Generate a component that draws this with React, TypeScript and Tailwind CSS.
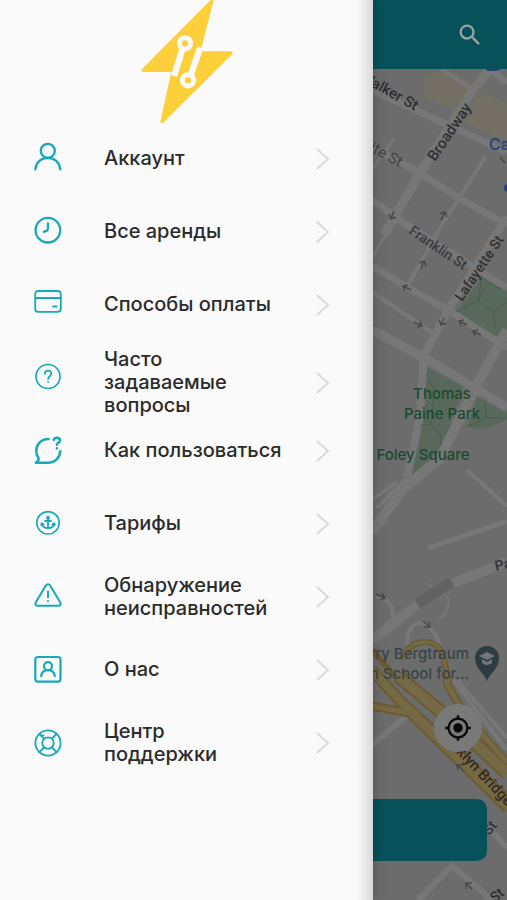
import type { ReactNode } from "react";
import { MdMyLocation, MdSearch } from "react-icons/md";

type MenuItem = {
    label: string;
    icon: ReactNode;
    tall?: boolean;
};

const items: MenuItem[] = [
    {
        label: "Аккаунт",
        icon: (
            <g strokeWidth="2.3">
                <circle cx="13.8" cy="6.8" r="7" />
                <path d="M1.3 25.4C2 18.300 7.200 13.800 13.800 13.800s11.800 4.500 12.500 11.600" />
            </g>
        ),
    },
    {
        label: "Все аренды",
        icon: (
            <g strokeWidth="2.3">
                <circle cx="13.9" cy="13.2" r="12.3" />
                <path d="M13.9 6.500v5.200c0 1-.3 1.500-1.100 1.900l-2.900 1.300" />
            </g>
        ),
    },
    {
        label: "Способы оплаты",
        icon: (
            <g strokeWidth="1.8">
                <rect x="1.2" y="1" width="25.6" height="20.8" rx="3" />
                <path d="M1.2 8h25.600M19 16.500h3.600" />
            </g>
        ),
    },
    {
        label: "Часто\nзадаваемые\nвопросы",
        tall: true,
        icon: (
            <g strokeWidth="1.7">
                <circle cx="14" cy="13.5" r="12" />
                <path d="M10.800 10.800c0-2 1.300-3.200 3.200-3.200s3.300 1.200 3.300 3c0 2.600-3.200 2.700-3.200 5.500M14.100 18.800v.3" />
            </g>
        ),
    },
    {
        label: "Как пользоваться",
        icon: (
            <g strokeWidth="2.5">
                <path d="M14.500 2.900C7 2.900 2.200 8.500 2.200 15c0 3 .8 5 2.400 7.200.3 1.600-1 3.200-2.800 4.600H14c7 0 11.900-5.200 12.300-11.600" />
                <path d="M19.800 3.800c.4-1.400 1.500-2.100 3-2.100 1.900 0 3.200 1.100 3.200 2.800 0 2.300-3.100 2.100-3.100 4.200M22.900 12.200v.2" />
            </g>
        ),
    },
    {
        label: "Тарифы",
        icon: (
            <g strokeWidth="1.6">
                <circle cx="14" cy="13.8" r="11.2" />
                <g strokeWidth="1.8">
                    <circle cx="14" cy="8.600" r="1" />
                    <path d="M14 9.600v9.600M11 12h6M7.800 14.400c.6 3.300 3.200 4.800 6.200 4.800s5.600-1.500 6.200-4.800M7.200 16l.6-1.800 1.700 1M20.800 16l-.6-1.800-1.700 1" />
                </g>
            </g>
        ),
    },
    {
        label: "Обнаружение\nнеисправностей",
        icon: (
            <g strokeWidth="2">
                <path d="M11.800 3.600 1.700 20.500c-.9 1.500.1 3.200 1.900 3.200h20.800c1.800 0 2.800-1.700 1.900-3.200L16.200 3.600c-1.100-1.800-3.300-1.800-4.400 0z" />
                <path d="M14 9.500v5.800M14 19v.2" />
            </g>
        ),
    },
    {
        label: "О нас",
        icon: (
            <g strokeWidth="2.2">
                <rect x="1.3" y="2" width="25.2" height="24.6" rx="2.5" />
                <circle cx="14" cy="11.200" r="4" />
                <path d="M7.200 21.200c.5-4 3.200-6 6.800-6s6.300 2 6.800 6" />
            </g>
        ),
    },
    {
        label: "Центр\nподдержки",
        icon: (
            <g strokeWidth="1.8">
                <circle cx="14" cy="15" r="12.6" />
                <circle cx="14" cy="15" r="5.7" />
                <path d="m5.200 5.800 4.900 4.700M6.600 7.600l2.900-.2M22.800 5.800l-4.900 4.700M5.200 24.200l4.900-4.700M22.800 24.200l-4.900-4.700" />
            </g>
        ),
    },
];

function Logo() {
    return (
        <svg className="h-[124px] w-[93px]" viewBox="60 0 279 372" aria-hidden="true">
            <path
                d="M275 4 69 211h91L126 365 333 159h-98z"
                fill="#fdd03b"
                stroke="#fdd03b"
                strokeWidth="10"
                strokeLinejoin="round"
            />
            <g stroke="#fafafa" strokeWidth="19" fill="none">
                <path d="m188 146-26 82" />
                <path d="m211 228 30-86" />
            </g>
            <g fill="#fdd03b" stroke="#fafafa" strokeWidth="15">
                <circle cx="195" cy="130" r="17" />
                <circle cx="204" cy="241" r="17" />
            </g>
        </svg>
    );
}

function CityMap() {
    return (
        <svg
            className="absolute inset-0 h-full w-full bg-[#6c6c6d]"
            viewBox="0 69 507 831"
            preserveAspectRatio="xMaxYMin slice"
            aria-hidden="true"
        >
            {/* blocks */}
            <path d="M424 76 450 69l22 14-16 27-32-12z" fill="#736f65" />
            <path d="m478 91 29 12v38l-42-18z" fill="#736f65" />
            <path d="M483 276 507 291v47l-8 1-43-27z" fill="#58695c" />
            <path d="m425 366 38 20-20 61-24 27-12-6 15-43z" fill="#58695c" />
            <path d="m477 397 30 15v8l-22 9-18-2z" fill="#58695c" />
            <ellipse cx="415" cy="470" rx="7" ry="4" fill="#58695c" />

            {/* streets */}
            <g fill="none" stroke="#777778" strokeWidth="7">
                <path d="M372 90 507 152" />
                <path d="m372 147 48 26 37 24 50 28" />
                <path d="m384 235 36-62 53-83 20-25" strokeWidth="9" />
                <path d="m441 69 32 21" strokeWidth="4" />
                <path d="m493 71 14 12" />
                <path d="m372 200 20 14 18 13 97 61" />
                <path d="m372 266 35 21 43 24 57 37" />
                <path d="m372 292 62 42" strokeWidth="4" />
                <path d="m408 285 32-57 20-31 25-40" strokeWidth="4" />
                <path d="m507 217-59 93-24 45-4 62-13 60" strokeWidth="8" />
                <path d="m372 330 51 27 52 31 32 20" strokeWidth="9" />
                <path d="m507 330-32 58-35 70-38 32-30 42" strokeWidth="10" />
                <path d="m372 169 22-30M372 258l20-34" strokeWidth="3" />
                <path d="m467 470 40 36M372 500l25-18M407 478l-30 30" strokeWidth="4" />
                <path d="m428 548 79-27" strokeWidth="5" />
                <path d="m372 640 45-35 36-22 54-21" strokeWidth="10" />
                <path d="m376 597c14 0 18 12 17 24M407 645c0-30 27-32 36 12" strokeWidth="4" />
                <path d="m372 745 38-32M418 900l34-34 40 34M487 745l20 25M487 826l20 22" strokeWidth="6" />
                <path d="m425 583 20 12c8 6 2 20-8 25" strokeWidth="2" />
                <path d="m457 680 50 58M447 672l60 78" strokeWidth="4" />
            </g>
            <path d="m417 604 35-22" stroke="#626263" strokeWidth="11" />
            <g fill="none" stroke="#4c5d50" strokeWidth="1">
                <path d="m456 312 22-12 4-24M478 300l15 12 14-10M478 300l10-17 14 6M493 312l3 16M426 374l8 15-3 35-11 2M431 424l10 12v10M485 398l1 20 21 0M486 418l-19 9" />
            </g>

            {/* expressway and ramps */}
            <g fill="none" stroke="#6a5b31" strokeWidth="10">
                <path d="m372 706 37 7 98 96" strokeWidth="9" />
                <path d="M372 670 402 703 507 800" strokeWidth="12" />
                <path d="m398 676 42 35 67 62" strokeWidth="14" />
                <path d="M446 679c5 17 20 38 61 83" strokeWidth="8" />
                <path d="M404 660c0-20 34-26 39-4l6 26" strokeWidth="6" />
                <path d="m372 650 28 32" strokeWidth="6" />
            </g>
            <g fill="none" stroke="#766a46" strokeWidth="5">
                <path d="m372 706 37 7 98 96" />
                <path d="M372 670 402 703 507 800" strokeWidth="8" />
                <path d="m398 676 42 35 67 62" strokeWidth="10" />
                <path d="M446 679c5 17 20 38 61 83" />
                <path d="M404 660c0-20 34-26 39-4l6 26" strokeWidth="3" />
            </g>

            {/* one-way arrows */}
            <g fill="none" stroke="#49494b" strokeWidth="1.5">
                <path d="m394 211-3 8m-2-5 2 5 5-2M441 220l4-8m-5 2 5-2 2 5M421 269l3-8m-5 2 5-2 2 5M411 290l-8-4m2 5-2-5 5-1M414 322l8 4m-2-5 2 5-5 1M444 318l-3 7m-2-5 2 5 5-2M467 325l-8-4m2 5-2-5 5-1M481 335l-8-4m2 5-2-5 5-1M376 594l9 4m-3-5 3 5-5 2M423 621l7 6m-1-6 1 6-6 0M464 771l-7-6m1 6-1-6 6 0M472 889l-6-6m0 6 0-6 6 0M500 157l5 6" />
            </g>
            <path d="M485 65h16v3q-2 3-5 3h-7q-3 0-4-3z" fill="#24417c" />

            {/* names of streets and places */}
            <g fontFamily="Roboto, sans-serif" fontSize="15" fontWeight="500" fill="#2f2f31">
                <text transform="translate(359 80) rotate(29)">Walker St</text>
                <text transform="translate(350 140) rotate(29)" fill="#48484a">White St</text>
                <text transform="translate(435 162) rotate(-56)">Broadway</text>
                <text transform="translate(408 233) rotate(34)" fontSize="14" fill="#3b3b3d">Franklin St</text>
                <text transform="translate(462 302) rotate(-56)" fontSize="14">Lafayette St</text>
                <text transform="translate(496 571) rotate(-13)" fontSize="14">Park Row</text>
                <text transform="translate(450 746) rotate(47)" fill="#362b1c">oklyn Bridge</text>
                <text transform="translate(489 836) rotate(-50)" fontSize="14">St</text>
                <text transform="translate(495 903) rotate(-40)" fontSize="14">St</text>
            </g>
            <g fontFamily="Inter, sans-serif" fontSize="15" fontWeight="500" fill="#1b4a31" textAnchor="middle">
                <text x="442" y="399">Thomas</text>
                <text x="442" y="419">Paine Park</text>
                <text x="423" y="460">Foley Square</text>
            </g>
            <g fontFamily="Inter, sans-serif" fontSize="15" fontWeight="500" fill="#394347" textAnchor="end">
                <text x="469" y="659">rry Bergtraum</text>
                <text x="469" y="679">h School for...</text>
            </g>
            <text x="489" y="150" fontFamily="Inter, sans-serif" fontSize="16" fontWeight="500" fill="#24417c">Canal</text>
            <circle cx="508" cy="188" r="4" fill="#24417c" />
            <path d="M487 681c-2-7-12-12-12-23a12 12 0 0 1 24 0c0 11-10 16-12 23z" fill="#2c3c41" />
            <path d="m479 656 8-4 8 4-8 4zM482 659v4q5 4 10 0v-4l-5 3z" fill="#727678" />
        </svg>
    );
}

function Drawer() {
    return (
        <aside className="absolute inset-y-0 left-0 w-[373px] bg-[#fafafa] shadow-[1px_0_12px_rgba(0,0,0,0.2)]">
            <div className="flex h-[121px] justify-center">
                <Logo />
            </div>
            <nav>
                <ul>
                    {items.map((item) => (
                        <li key={item.label}>
                            <a
                                href="#"
                                className="flex h-[73px] items-center pl-[34px] pr-[43px] text-[#2b2b2b]"
                            >
                                <svg
                                    className="size-7 shrink-0 overflow-visible"
                                    viewBox="0 0 28 28"
                                    fill="none"
                                    stroke="#17a8ba"
                                    strokeLinecap="round"
                                    strokeLinejoin="round"
                                    aria-hidden="true"
                                >
                                    {item.icon}
                                </svg>
                                <span className={item.tall ? "flex flex-1 items-center pt-3" : "flex flex-1 items-center pt-0.5"}>
                                    <span className="flex-1 whitespace-pre-line pl-[42px] font-['Inter',sans-serif] text-[20px] leading-[23px] font-medium">
                                        {item.label}
                                    </span>
                                    <svg
                                        className="h-6 w-4 shrink-0"
                                        viewBox="0 0 16 24"
                                        fill="none"
                                        stroke="#dadada"
                                        strokeWidth="2"
                                        aria-hidden="true"
                                    >
                                        <path d="m3 2 11 10L3 22" />
                                    </svg>
                                </span>
                            </a>
                        </li>
                    ))}
                </ul>
            </nav>
            <div className="pointer-events-none absolute inset-y-0 right-0 w-4 bg-linear-to-r from-transparent to-[#d8d8d8]" />
        </aside>
    );
}

export default function App() {
    return (
        <div className="relative flex min-h-screen flex-col overflow-hidden bg-[#6c6c6d]">
            <header className="flex h-[69px] items-center justify-end bg-[#07515a] pr-[23px]">
                <button type="button" aria-label="Поиск" className="text-[#9aa3a4]">
                    <MdSearch size={28} />
                </button>
            </header>

            <main className="relative flex flex-1 flex-col justify-end">
                <CityMap />
                <button
                    type="button"
                    aria-label="Моё местоположение"
                    className="relative mr-[25px] mb-[47px] flex size-12 items-center justify-center self-end rounded-full bg-[#79797a] text-[#080808]"
                >
                    <MdMyLocation size={28} />
                </button>
                <button
                    type="button"
                    aria-label="Начать аренду"
                    className="relative mx-5 mb-[39px] h-[62px] rounded-[10px] bg-[#07515a]"
                />
            </main>

            <Drawer />
        </div>
    );
}
